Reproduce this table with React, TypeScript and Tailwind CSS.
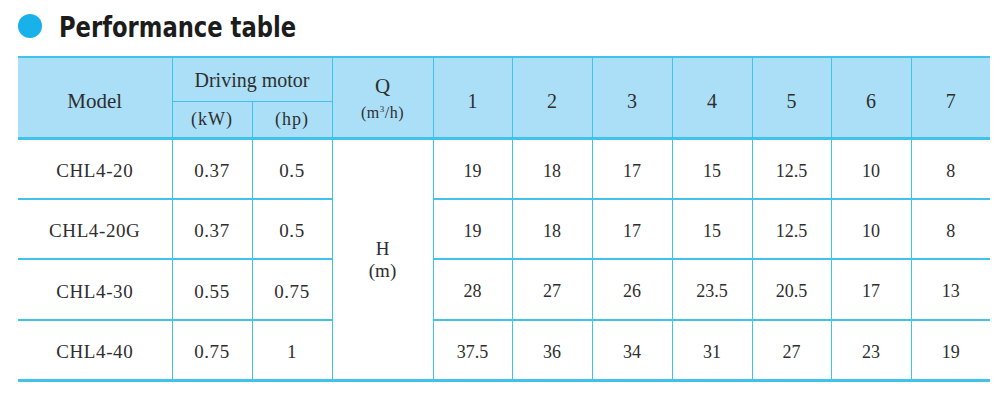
import React from "react";

const rows = [
  { m: "CHL4-20", kw: "0.37", hp: "0.5", v: ["19", "18", "17", "15", "12.5", "10", "8"] },
  { m: "CHL4-20G", kw: "0.37", hp: "0.5", v: ["19", "18", "17", "15", "12.5", "10", "8"] },
  { m: "CHL4-30", kw: "0.55", hp: "0.75", v: ["28", "27", "26", "23.5", "20.5", "17", "13"] },
  { m: "CHL4-40", kw: "0.75", hp: "1", v: ["37.5", "36", "34", "31", "27", "23", "19"] },
];

const L = "border-[#3fc3ec]";

export default function App() {
  return (
    <div className="w-[1000px] h-[400px] bg-white relative overflow-hidden">
      <div className="flex items-center h-[50px] pl-[18px] pt-[2px]">
        <div className="w-[24px] h-[24px] rounded-full bg-[#18b1ea] shrink-0" />
        <div className="ml-[17px] mt-[3px] text-[28px] font-bold text-[#1c1c1c] leading-none scale-x-[0.9] origin-left whitespace-nowrap font-['DejaVu_Sans_Condensed','DejaVu_Sans',sans-serif]">
          Performance table
        </div>
      </div>
      <table
        className={`ml-[18px] mt-[6px] w-[972px] border-collapse table-fixed text-[#2e2e2e] border-t-2 border-b-[3px] font-['Liberation_Serif',serif] ${L}`}
      >
        <colgroup>
          <col className="w-[154px]" />
          <col className="w-[80px]" />
          <col className="w-[80px]" />
          <col className="w-[101px]" />
          <col className="w-[79px]" />
          <col className="w-[80px]" />
          <col className="w-[80px]" />
          <col className="w-[80px]" />
          <col className="w-[79px]" />
          <col className="w-[80px]" />
          <col className="w-[79px]" />
        </colgroup>
        <thead className="bg-[#aadff7]">
          <tr className="h-[44px]">
            <th rowSpan={2} className={`font-normal text-[21px] text-center pt-[8px] border-b-[3px] ${L}`}>Model</th>
            <th colSpan={2} className={`font-normal text-[20px] text-center border-l border-b pt-[2px] ${L}`}>Driving motor</th>
            <th rowSpan={2} className={`font-normal text-center border-l border-b-[3px] ${L}`}>
              <div className="text-[21px] leading-[24px] mt-[2px]">Q</div>
              <div className="text-[16px] leading-[20px] mt-[5px] tracking-[0.5px]">
                (m<sup className="text-[9px] relative top-[-6px]">3</sup>/h)
              </div>
            </th>
            {["1", "2", "3", "4", "5", "6", "7"].map((n) => (
              <th key={n} rowSpan={2} className={`font-normal text-[20px] text-center pt-[8px] border-l border-b-[3px] ${L}`}>{n}</th>
            ))}
          </tr>
          <tr className="h-[37px]">
            <th className={`font-normal text-[18px] text-center border-l border-b-[3px] tracking-[1px] ${L}`}>(kW)</th>
            <th className={`font-normal text-[18px] text-center border-l border-b-[3px] tracking-[1px] ${L}`}>(hp)</th>
          </tr>
        </thead>
        <tbody>
          {rows.map((r, i) => (
            <tr key={r.m} className="h-[60.5px]">
              <td className={`text-[19px] text-center pt-[5px] tracking-[0.6px] ${i < 3 ? "border-b-2" : ""} ${L}`}>{r.m}</td>
              <td className={`text-[19px] text-center pt-[5px] tracking-[0.6px] border-l ${i < 3 ? "border-b-2" : ""} ${L}`}>{r.kw}</td>
              <td className={`text-[19px] text-center pt-[5px] tracking-[0.6px] border-l ${i < 3 ? "border-b-2" : ""} ${L}`}>{r.hp}</td>
              {i === 0 && (
                <td rowSpan={4} className={`text-center border-l align-top ${L}`}>
                  <div className="mt-[98px] text-[19px] leading-[22px]">H</div>
                  <div className="text-[19px] leading-[22px]">(m)</div>
                </td>
              )}
              {r.v.map((v, j) => (
                <td key={j} className={`text-[18px] text-center pt-[5px] border-l ${i < 3 ? "border-b-2" : ""} ${L}`}>{v}</td>
              ))}
            </tr>
          ))}
        </tbody>
      </table>
    </div>
  );
}
